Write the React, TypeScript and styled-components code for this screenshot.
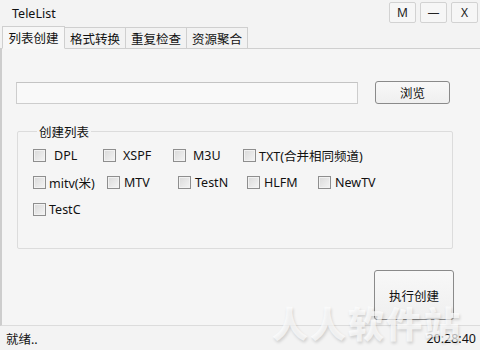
import React from "react";
import styled, { createGlobalStyle } from "styled-components";

const Global = createGlobalStyle`
  html, body { margin: 0; padding: 0; background: #f3f3f3; }
  * { box-sizing: border-box; }
  body { font-family: "Noto Sans", "Noto Sans CJK SC", sans-serif; font-size: 12px; color: #111; }
`;

const Window = styled.div`
  width: 480px;
  height: 350px;
  display: flex;
  flex-direction: column;
  background: #f3f3f3;
  position: relative;
  overflow: hidden;
`;

const TitleBar = styled.div`
  height: 26px;
  display: flex;
  align-items: center;
  padding: 0 2px 0 12px;
`;

const Title = styled.div`
  flex: 1;
  font-size: 12.5px;
  color: #111;
`;

const WinButtons = styled.div`
  display: flex;
  gap: 4px;
  margin-top: -2px;
`;

const WinButton = styled.div`
  width: 27px;
  height: 21px;
  border: 1px solid #d2d2d2;
  border-radius: 2px;
  background: #f6f6f6;
  display: flex;
  align-items: center;
  justify-content: center;
  font-size: 12px;
  color: #222;
`;

const TabStrip = styled.div`
  height: 22px;
  display: flex;
  align-items: flex-end;
  padding-left: 2px;
  position: relative;
  z-index: 1;
`;

const Tab = styled.div<{ $active?: boolean }>`
  width: ${(p) => (p.$active ? 63 : 62)}px;
  height: ${(p) => (p.$active ? 23 : 21)}px;
  margin-bottom: ${(p) => (p.$active ? -1 : 0)}px;
  border: 1px solid #cfcfcf;
  border-bottom: ${(p) => (p.$active ? "1px solid #f7f7f7" : "none")};
  margin-left: ${(p) => (p.$active ? 0 : -1)}px;
  background: ${(p) => (p.$active ? "#f7f7f7" : "#f2f2f2")};
  display: flex;
  align-items: center;
  justify-content: center;
  font-size: 12.5px;
  font-family: "Noto Sans CJK SC", sans-serif;
  color: #111;
  &:first-child { margin-left: 0; }
`;

const Panel = styled.div`
  height: 278px;
  border-top: 1px solid #cfcfcf;
  border-left: 2px solid #cdcdcd;
  border-bottom: 1px solid #dcdcdc;
  background: #f5f5f5;
  display: flex;
  flex-direction: column;
`;

const PathRow = styled.div`
  display: flex;
  align-items: center;
  margin-top: 32px;
  padding-left: 14px;
`;

const PathInput = styled.div`
  width: 342px;
  height: 22px;
  border: 1px solid #cdcdcd;
  border-top-color: #c4c4c4;
  background: #f9f9f9;
`;

const Button = styled.div<{ $w: number; $h: number }>`
  width: ${(p) => p.$w}px;
  height: ${(p) => p.$h}px;
  border: 1px solid #8a8a8a;
  border-radius: 3px;
  background: linear-gradient(#f8f8f8, #efefef);
  display: flex;
  align-items: center;
  justify-content: center;
  font-family: "Noto Sans CJK SC", sans-serif;
  font-size: 12.5px;
  color: #111;
`;

const BrowseButton = styled(Button)`
  margin-left: 17px;
`;

const GroupBox = styled.fieldset`
  margin: 20px 0 0 15px;
  width: 436px;
  height: 125px;
  border: 1px solid #dcdcdc;
  border-radius: 2px;
  padding: 7px 0 0 15px;
  display: flex;
  flex-direction: column;
  gap: 9px;
`;

const Legend = styled.legend`
  padding: 0 2px;
  margin-left: 4px;
  font-family: "Noto Sans CJK SC", sans-serif;
  font-size: 12.5px;
  color: #111;
  line-height: 15px;
`;

const CheckRow = styled.div`
  display: flex;
  height: 18px;
  align-items: center;
`;

const CheckItem = styled.div<{ $w?: number; $gap: number }>`
  display: flex;
  align-items: center;
  width: ${(p) => (p.$w ? `${p.$w}px` : "auto")};
  gap: ${(p) => p.$gap}px;
  font-size: 12.5px;
  color: #111;
  white-space: nowrap;
`;

const Box = styled.span`
  width: 13px;
  height: 13px;
  border: 1px solid #8e8e8e;
  background: linear-gradient(135deg, #d9d9d9, #f4f4f4);
  box-shadow: inset 0 0 0 1px #f2f2f2;
  flex: none;
`;

const ExecRow = styled.div`
  margin-top: 21px;
  display: flex;
  justify-content: flex-end;
  padding-right: 26px;
`;

const StatusBar = styled.div`
  flex: 1;
  display: flex;
  align-items: center;
  justify-content: space-between;
  padding: 1px 4px 0 6px;
  font-size: 12.5px;
  color: #111;
  font-family: "Noto Sans", "Noto Sans CJK SC", sans-serif;
`;

const Watermark = styled.div`
  position: absolute;
  left: 272px;
  top: 296px;
  font-family: "Noto Sans CJK SC", sans-serif;
  font-weight: 900;
  font-size: 36px;
  letter-spacing: 2px;
  color: rgba(255, 255, 255, 0.7);
  text-shadow: 1px 2px 3px rgba(0, 0, 0, 0.15);
  pointer-events: none;
`;

type Item = { label: string; w?: number; gap: number };

const row1: Item[] = [
  { label: "DPL", w: 70, gap: 8 },
  { label: "XSPF", w: 70, gap: 7 },
  { label: "M3U", w: 70, gap: 7 },
  { label: "TXT(合并相同频道)", gap: 3 },
];
const row2: Item[] = [
  { label: "mitv(米)", w: 74, gap: 3 },
  { label: "MTV", w: 71, gap: 4 },
  { label: "TestN", w: 69, gap: 4 },
  { label: "HLFM", w: 71, gap: 4 },
  { label: "NewTV", gap: 4 },
];
const row3: Item[] = [{ label: "TestC", gap: 3 }];

const Row = ({ items }: { items: Item[] }) => (
  <CheckRow>
    {items.map((it) => (
      <CheckItem key={it.label} $w={it.w} $gap={it.gap}>
        <Box />
        <span>{it.label}</span>
      </CheckItem>
    ))}
  </CheckRow>
);

export default function App() {
  return (
    <>
      <Global />
      <Window>
        <TitleBar>
          <Title>TeleList</Title>
          <WinButtons>
            <WinButton>M</WinButton>
            <WinButton>—</WinButton>
            <WinButton>X</WinButton>
          </WinButtons>
        </TitleBar>
        <TabStrip>
          <Tab $active>列表创建</Tab>
          <Tab>格式转换</Tab>
          <Tab>重复检查</Tab>
          <Tab>资源聚合</Tab>
        </TabStrip>
        <Panel>
          <PathRow>
            <PathInput />
            <BrowseButton $w={75} $h={23}>浏览</BrowseButton>
          </PathRow>
          <GroupBox>
            <Legend>创建列表</Legend>
            <Row items={row1} />
            <Row items={row2} />
            <Row items={row3} />
          </GroupBox>
          <ExecRow>
            <Button $w={80} $h={50}>执行创建</Button>
          </ExecRow>
        </Panel>
        <StatusBar>
          <span>就绪..</span>
          <span>20:28:40</span>
        </StatusBar>
        <Watermark>人人软件站</Watermark>
      </Window>
    </>
  );
}
